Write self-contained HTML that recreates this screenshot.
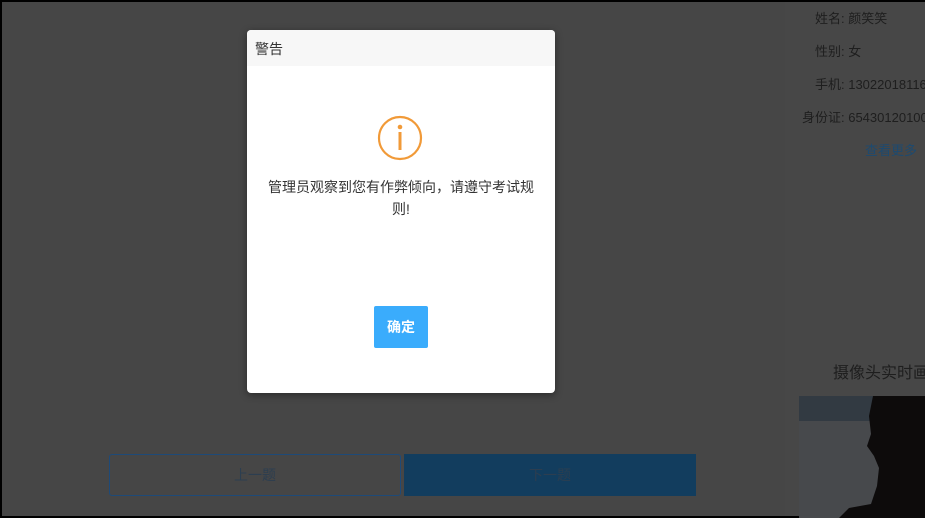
<!DOCTYPE html>
<html><head><meta charset="utf-8"><style>
*{margin:0;padding:0;box-sizing:border-box}
body{width:925px;height:518px;overflow:hidden;background:#000;font-family:"Liberation Sans","Noto Sans CJK SC",sans-serif;position:relative}
.bg{position:absolute;left:2px;top:2px;width:921px;height:514px;background:#464646}
.side{position:absolute;left:785px;top:2px;width:140px;height:514px;background:#474747}
.t{position:absolute;font-size:13px;color:#1e1e1e;white-space:nowrap}
.modal{position:absolute;left:247px;top:30px;width:308px;height:363px;background:#fff;border-radius:4px;box-shadow:0 2px 8px rgba(0,0,0,.4);overflow:hidden}
.hd{height:36px;background:#f7f7f7;font-size:14px;color:#333;padding:9px 0 0 8px}
.msg{position:absolute;left:16px;top:146px;width:276px;text-align:center;font-size:14px;line-height:22px;color:#333}
.ok{position:absolute;left:127px;top:276px;width:54px;height:42px;background:#3aacfc;color:#fff;font-size:14px;font-weight:bold;text-align:center;line-height:42px;border-radius:2px}
.b1{position:absolute;left:109px;top:454px;width:292px;height:42px;border:1px solid #1e4a78;border-radius:3px;color:#2c3e50;font-size:14px;text-align:center;line-height:40px}
.b2{position:absolute;left:404px;top:454px;width:292px;height:42px;background:#123d5e;color:#2c3e50;font-size:14px;text-align:center;line-height:42px}
.cam{position:absolute;left:799px;top:396px;width:126px;height:122px;background:#47494c;overflow:hidden}
</style></head><body>
<div class="bg"></div>
<div class="side"></div>
<div class="t" style="left:815px;top:8px">姓名: 颜笑笑</div>
<div class="t" style="left:815px;top:41px">性别: 女</div>
<div class="t" style="left:815px;top:74px">手机: 13022018116</div>
<div class="t" style="left:802px;top:107px">身份证: 654301201000</div>
<div class="t" style="left:865px;top:140px;color:#1d4a70">查看更多</div>
<div class="t" style="left:833px;top:359px;font-size:16px">摄像头实时画面</div>
<div class="cam">
<div style="position:absolute;left:0;top:0;width:80px;height:25px;background:#323a42"></div>
<svg style="position:absolute;left:0;top:0" width="126" height="122"><path d="M74 0 L126 0 L126 122 L40 122 L50 112 L72 108 L78 90 L80 72 L75 60 L68 50 L72 38 L70 20 Z" fill="#0d0b0b"/></svg>
</div>
<div class="b1">上一题</div>
<div class="b2">下一题</div>
<div class="modal">
<div class="hd">警告</div>
<svg style="position:absolute;left:130px;top:85px" width="46" height="46" viewBox="0 0 46 46"><circle cx="23" cy="23" r="21" fill="none" stroke="#f19a38" stroke-width="2.2"/><circle cx="23" cy="12" r="2.3" fill="#f19a38"/><rect x="21.5" y="17" width="3" height="18" fill="#f19a38"/></svg>
<div class="msg">管理员观察到您有作弊倾向，请遵守考试规则!</div>
<div class="ok">确定</div>
</div>
</body></html>
